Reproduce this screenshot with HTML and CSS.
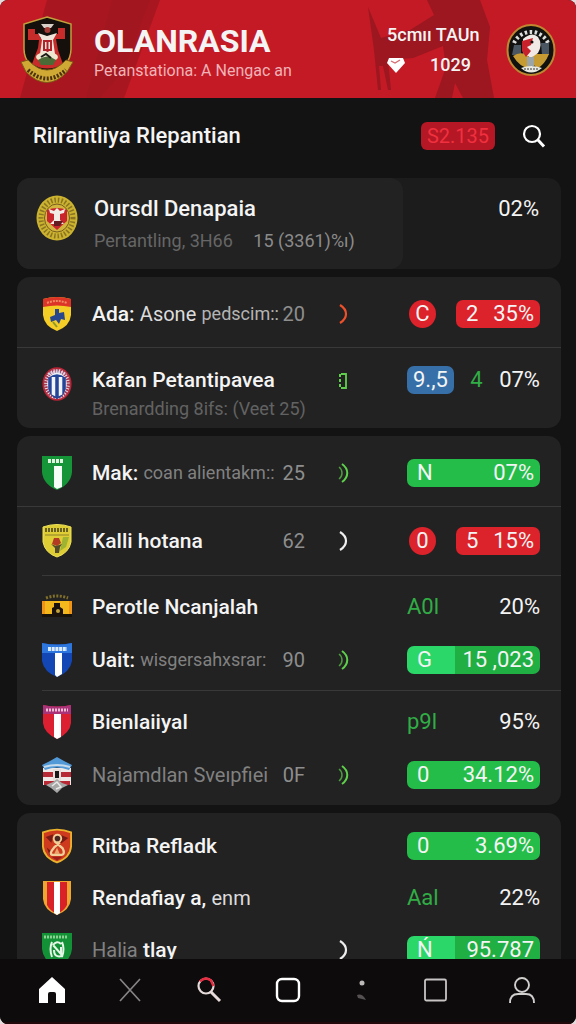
FILE: index.html
```html
<!DOCTYPE html>
<html lang="id">
<head>
<meta charset="utf-8">
<meta name="viewport" content="width=device-width, initial-scale=1">
<title>Olanrasia</title>
<link rel="stylesheet" href="styles.css">
</head>
<body>
<svg class="defs" aria-hidden="true">
  <symbol id="arc" viewBox="0 0 12 22"><path d="M3 2C11 7 11 15 3 20" fill="none" stroke="currentColor" stroke-width="2.200"/></symbol>
  <symbol id="arcs" viewBox="0 0 12 22"><path d="M5 2C12 7 12 15 5 20" fill="none" stroke="currentColor" stroke-width="2"/><path d="M2 5C6 8 6 14 2 17" fill="none" stroke="currentColor" stroke-width="1.500" opacity=".7"/></symbol>
</svg>
<div class="app">
  <header class="hero">
    <svg class="hero-art" viewBox="0 0 576 98" preserveAspectRatio="none" aria-hidden="true">
      <path d="M47 0H160L124 98H20Z" fill="#a8171f"/>
      <path d="M112 0H150L124 70L100 98H86Z" fill="#981820" opacity=".4"/>
      <path d="M427 0H480L490 27L487 60L494 98H463L455 83L452 98H435L446 67L443 46L413 58L388 60L391 90L388 90L383 66H379L381 90H378L374 50L368 7L381 38L410 30L434 15Z" fill="#9c171f"/>
    </svg>
    <svg class="crest" viewBox="0 0 56 68" aria-hidden="true">
      <path d="M27 1L51 8V33C51 47 39 56 27 61C14 55 4 47 4 33V8Z" fill="#15100c" stroke="#c2a13c" stroke-width="1.500"/>
      <path d="M8 13H15V18H20V22H34V18H38V12H45V23H36L38 34L43 48Q27 57 12 48L18 32L19 24H8Z" fill="#c72b2a"/>
      <path d="M18 17L27 20L37 17L33 24L35 38H20L22 24Z" fill="#eee4da"/>
      <path d="M21 8H34L31 12H24Z" fill="#d8d0c8"/><circle cx="27.500" cy="14" r="3" fill="#a43a33"/>
      <path d="M24 25H31V34H24ZM27.500 25V36" fill="none" stroke="#b0232a" stroke-width="2"/>
      <ellipse cx="27" cy="41" rx="11" ry="5" fill="#efe6cf"/><path d="M18 44Q27 37 36 44L33 49H21Z" fill="#4b6b36"/><path d="M21 41L26 38L31 42" stroke="#1b1b17" fill="none" stroke-width="2"/>
      <path d="M1 46L8 44Q27 64 46 44L53 46L47 56Q27 77 6 56Z" fill="#d0a935" stroke="#7b5a17"/>
      <path d="M8 54Q27 71 46 54" fill="none" stroke="#4a3210" stroke-width="4" stroke-dasharray="2 1.500"/>
    </svg>
    <div class="hero-title">
      <h1>OLANRASIA</h1>
      <p>Petanstationa: A Nengac an</p>
    </div>
    <div class="hero-stats">
      <span>5cmıı TAUn</span>
      <span class="hero-score">
        <svg class="gem" viewBox="0 0 18 16" aria-hidden="true"><path d="M2 1H16L18 6L9 16L0 6Z" fill="#fff"/><path d="M4 4L8 6L13 3" fill="none" stroke="#d76b70" stroke-width="1.300"/></svg>
        1029
      </span>
    </div>
    <svg class="avatar" viewBox="0 0 50 52" aria-hidden="true">
      <ellipse cx="25" cy="26" rx="23.500" ry="25" fill="#11110f" stroke="#bf8730" stroke-width="2"/>
      <path d="M8 19A19 20 0 0 1 42 19" fill="none" stroke="#ddd" stroke-width="4" stroke-dasharray="2.500 2.500"/>
      <path d="M8 21H15V31H6ZM35 19H43V31H36Z" fill="#4a5763"/>
      <path d="M7 32Q14 27 22 31L25 45Q14 44 7 32ZM27 30H43Q39 40 32 44L26 40Z" fill="#c69c32"/>
      <path d="M17 15Q26 7 32 13Q37 20 32 29L25 34L17 29Z" fill="#f1e9e5"/>
      <path d="M16 17L27 14L25 21L21 23L25 27L20 33L16 27Z" fill="#c7222b"/><circle cx="26" cy="18" r="1.500" fill="#111"/>
      <path d="M21 33H28V42H21Z" fill="#9ba5a7"/><path d="M15 44Q25 40 36 44Q25 53 15 44Z" fill="#e9e9e3"/><path d="M18 45H33" stroke="#333" stroke-dasharray="2 1"/>
    </svg>
  </header>

  <section class="toolbar">
    <h2>Rilrantliya Rlepantian</h2>
    <span class="tag">S2.135</span>
    <button class="icon-button" type="button" aria-label="Search">
      <svg viewBox="0 0 24 24" aria-hidden="true"><circle cx="10" cy="10" r="8"/><path d="M15.500 15.500L22 22.500" stroke-width="3"/></svg>
    </button>
  </section>

  <main class="list">
    <section class="card summary">
      <div class="summary-main">
        <svg class="seal" viewBox="0 0 42 46" aria-hidden="true">
          <ellipse cx="21" cy="23" rx="20.500" ry="22.500" fill="#cbb32f"/>
          <ellipse cx="21" cy="23" rx="16" ry="18" fill="none" stroke="#8a7423" stroke-width="5" stroke-dasharray="1.500 2"/>
          <ellipse cx="21" cy="23" rx="12.500" ry="14" fill="#d2b53d" stroke="#775c1d"/>
          <path d="M11 15Q21 11 31 15V26L21 35L11 26Z" fill="#c9252c"/>
          <path d="M13 14L18 16L21 13L24 16L29 14L28 18L24 19V25L28 29H14L18 25V19L14 18Z" fill="#f2ece6"/>
          <path d="M18 26H27L24 31H18Z" fill="#641c20"/>
        </svg>
        <div class="summary-text">
          <h3>Oursdl Denapaia</h3>
          <p>Pertantling, 3H66 <span class="bright">15 (3361)%ı)</span></p>
        </div>
      </div>
      <strong class="summary-value">02%</strong>
    </section>

    <ul class="card">
      <li class="row tall">
        <svg class="badge" viewBox="0 0 30 36" aria-hidden="true"><path d="M1 3Q15-1 29 3V19Q28 30 15 35Q2 30 1 19Z" fill="#f4cd26"/><path d="M1 3Q15-1 29 3V11Q15 8 1 11Z" fill="#dc3426"/><path d="M5 7Q15 3 25 7" fill="none" stroke="#f08a64" stroke-width="2" stroke-dasharray="2 1"/><path d="M13 13H17V17L22 16L23 24L19 23L17 28L14 24L9 26L8 21L13 19Z" fill="#28468e"/><path d="M11 26L15 31" stroke="#8c9a2c" stroke-width="2"/></svg>
        <div class="name"><b>Ada:</b>&nbsp;<span class="lit">Asone</span>&nbsp;<span class="soft">pedscim::</span><span class="count">20</span></div>
        <svg class="trend red" aria-hidden="true"><use href="#arc"/></svg>
        <div class="values"><span class="dot">C</span><span class="pill loss"><span>2</span><span>35%</span></span></div>
      </li>
      <li class="row double">
        <svg class="badge" viewBox="0 0 34 38" aria-hidden="true"><ellipse cx="17" cy="19" rx="15.500" ry="18" fill="#edf1f8" stroke="#b72435" stroke-width="2"/><ellipse cx="17" cy="19" rx="13" ry="15" fill="none" stroke="#a93851" stroke-width="4" stroke-dasharray="2 1"/><path d="M7 12Q17 4 27 12V24Q25 33 17 36Q9 33 7 24Z" fill="#254599"/><path d="M11 11H15V33L11 31ZM19 11H23V31L19 33Z" fill="#f1f5fb"/><path d="M7 8Q17 2 27 8" fill="none" stroke="#d2d3e9" stroke-width="3" stroke-dasharray="2 1"/></svg>
        <div class="name"><b>Kafan Petantipavea</b><small>Brenardding 8ifs: (Veet 25)</small></div>
        <svg class="trend green" viewBox="0 0 12 22" aria-hidden="true"><path d="M4 4H9V18H4" fill="none" stroke="currentColor" stroke-width="1.800"/><path d="M3 4V18" stroke="currentColor" stroke-width="2" stroke-dasharray="3 2"/></svg>
        <div class="values"><span class="pill draw">9.,5</span><span class="up">4</span><span>07%</span></div>
      </li>
    </ul>

    <ul class="card">
      <li class="row tall">
        <svg class="badge" viewBox="0 0 30 36" aria-hidden="true"><path d="M0 1H30V17Q29 29 15 35Q1 29 0 17Z" fill="#159538"/><path d="M12 11H20V32L15 34L12 32Z" fill="#f4fff5"/><path d="M6 6H22" stroke="#dff4df" stroke-width="4" stroke-dasharray="3 1"/></svg>
        <div class="name"><b>Mak:</b>&nbsp;<span class="dim">coan alientakm::</span><span class="count">25</span></div>
        <svg class="trend green" aria-hidden="true"><use href="#arcs"/></svg>
        <div class="values"><span class="pill win"><span>N</span><span>07%</span></span></div>
      </li>
      <li class="row mid">
        <svg class="badge" viewBox="0 0 30 36" aria-hidden="true"><path d="M1 4Q15-1 29 4V19Q27 30 15 34Q3 30 1 19Z" fill="#dfcd36" stroke="#efe35a"/><path d="M3 7H27" stroke="#675f23" stroke-width="4" stroke-dasharray="2 1"/><path d="M3 12H27" stroke="#8b812b"/><path d="M21 14H27L24 24L18 28Z" fill="#9eb331"/><path d="M12 15H17L19 20L15 23L10 21Z" fill="#b33b24"/><path d="M9 21L14 23L20 21L18 24L17 30H13L13 25Z" fill="#514a2c"/></svg>
        <div class="name"><b>Kalli hotana</b><span class="count">62</span></div>
        <svg class="trend" aria-hidden="true"><use href="#arc"/></svg>
        <div class="values"><span class="dot">0</span><span class="pill loss"><span>5</span><span>15%</span></span></div>
      </li>
      <li class="group">
        <ul>
          <li class="row">
            <svg class="badge" viewBox="0 0 30 36" aria-hidden="true"><path d="M0 12H30V26H0Z" fill="#f3b91c"/><path d="M0 25H30V28H0Z" fill="#17120a"/><path d="M4 9Q15 5 26 9" fill="none" stroke="#81702b" stroke-width="3" stroke-dasharray="2 1.500"/><path d="M0 12H3V25H0ZM27 12H30V25H27Z" fill="#ef9419"/><path d="M10 28V19L12 18V14H18V18L21 20V28Z" fill="#19130b"/><circle cx="16" cy="22" r="2" fill="#c4a33b"/></svg>
            <div class="name"><b>Perotle Ncanjalah</b></div><span></span>
            <div class="values"><span class="code">A0l</span><span>20%</span></div>
          </li>
          <li class="row">
            <svg class="badge" viewBox="0 0 30 36" aria-hidden="true"><path d="M0 1Q15 4 30 1V19Q28 30 15 35Q2 30 0 19Z" fill="#1247b5"/><path d="M0 1Q15 4 30 1V11H0Z" fill="#2d76dd"/><path d="M6 7H25" stroke="#dcecff" stroke-width="4" stroke-dasharray="3 .7"/><path d="M13 11H20V32L15 35L13 33Z" fill="#fff"/></svg>
            <div class="name"><b>Uait:</b>&nbsp;<span class="dim">wisgersahxsrar:</span><span class="count">90</span></div>
            <svg class="trend green" aria-hidden="true"><use href="#arcs"/></svg>
            <div class="values"><span class="pill win split"><span>G</span><span>15 ,023</span></span></div>
          </li>
        </ul>
      </li>
      <li class="group">
        <ul>
          <li class="row">
            <svg class="badge" viewBox="0 0 30 36" aria-hidden="true"><path d="M1 1Q15 4 29 1V19Q28 29 15 35Q2 29 1 19Z" fill="#dc2031"/><path d="M1 1Q15 4 29 1V10H1Z" fill="#a93279"/><path d="M4 6H26" stroke="#edbed6" stroke-width="3" stroke-dasharray="2 1"/><path d="M12 10H19V33L15 35L12 33Z" fill="#fff"/></svg>
            <div class="name"><b>Bienlaiiyal</b></div><span></span>
            <div class="values"><span class="code">p9l</span><span>95%</span></div>
          </li>
          <li class="row">
            <svg class="badge" viewBox="0 0 30 36" aria-hidden="true"><path d="M1 11H29V28H1Z" fill="#eee9e7"/><path d="M1 15H29V20H1ZM2 24H28V28H2Z" fill="#b72934"/><path d="M0 8L8 4L15 0L22 4L30 8L27 13Q15 8 3 13Z" fill="#5299d8"/><path d="M2 10Q15 6 28 10" fill="none" stroke="#c6daeb" stroke-width="2"/><path d="M11 12H19V24H11Z" fill="#e6dedb"/><path d="M13 14H17V21H13Z" fill="#171717"/><path d="M4 28L11 25L15 22L20 26L26 28L20 31L15 36L9 31Z" fill="#a6a7a6"/><path d="M10 29L15 25L19 30L14 32" stroke="#e8e8e6" fill="none" stroke-width="1.500"/></svg>
            <div class="name"><span class="dim wide">Najamdlan Sveıpfiei</span><span class="count">0F</span></div>
            <svg class="trend green" aria-hidden="true"><use href="#arcs"/></svg>
            <div class="values"><span class="pill win"><span>0</span><span>34.12%</span></span></div>
          </li>
        </ul>
      </li>
    </ul>

    <ul class="card last">
      <li class="row">
        <svg class="badge" viewBox="0 0 32 37" aria-hidden="true"><path d="M1 4Q16-2 31 4V19Q30 31 16 36Q2 31 1 19Z" fill="#ce3a1e" stroke="#eab12d" stroke-width="2"/><path d="M4 9L12 6L10 15ZM21 7L28 10L20 16ZM5 20L11 25L8 28Z" fill="#781b14"/><path d="M13 13L22 21Q25 27 21 28H11Q7 27 13 20L19 15" fill="none" stroke="#f1cf98" stroke-width="2.500"/><circle cx="16.500" cy="10.500" r="4" fill="#4a2722" stroke="#f1cf98" stroke-width="2"/><path d="M16 20L19 27H13Z" fill="#e8a36a"/><path d="M10 30H22L16 34Z" fill="#9c1c1a"/></svg>
        <div class="name"><b>Ritba Refladk</b></div><span></span>
        <div class="values"><span class="pill win"><span>0</span><span>3.69%</span></span></div>
      </li>
      <li class="row">
        <svg class="badge" viewBox="0 0 30 36" aria-hidden="true"><path d="M1 1H29V19Q28 30 15 35Q2 30 1 19Z" fill="#efa62e"/><path d="M5 2H25V25Q22 31 15 34Q8 31 5 25Z" fill="#d92128"/><path d="M12 2H18V33L15 35L12 33Z" fill="#fff"/></svg>
        <div class="name"><b>Rendafiay a,</b>&nbsp;<span class="lit">enm</span></div><span></span>
        <div class="values"><span class="code">Aal</span><span>22%</span></div>
      </li>
      <li class="row">
        <svg class="badge" viewBox="0 0 30 36" aria-hidden="true"><path d="M0 1H30V17Q29 29 15 35Q1 29 0 17Z" fill="#139137"/><path d="M2 5H25" stroke="#8cd092" stroke-width="3" stroke-dasharray="2 1"/><path d="M10 10Q7 17 10 25M20 10Q23 17 20 25M11 13Q15 8 19 12M11 13L19 22V15M12 18Q12 26 20 24" fill="none" stroke="#e5f7e6" stroke-width="2"/></svg>
        <div class="name"><span class="dim wide">Halia</span>&nbsp;<b>tlay</b></div>
        <svg class="trend" aria-hidden="true"><use href="#arc"/></svg>
        <div class="values"><span class="pill win split"><span>Ń</span><span>95.787</span></span></div>
      </li>
    </ul>
  </main>

  <nav class="tabs" aria-label="Main">
    <a href="#home" aria-label="Home"><svg viewBox="0 0 28 28"><path d="M14 1L27 13V27H18V18Q18 16 16 16H12Q10 16 10 18V27H1V13Z" fill="#fff"/></svg></a>
    <a href="#close" aria-label="Close"><svg viewBox="0 0 28 28"><path d="M4 3L24 25M24 3L4 25" stroke="#858383" stroke-width="1.700"/></svg></a>
    <a href="#search" aria-label="Search"><svg viewBox="0 0 28 28"><circle cx="11" cy="10" r="7.500" fill="none" stroke="#e6dada" stroke-width="2.200"/><path d="M5 5.500Q10 0 16 4.500L18.500 10" fill="none" stroke="#e72d42" stroke-width="2.500"/><path d="M16 16L25 25" stroke="#e6dada" stroke-width="3"/></svg></a>
    <a href="#board" aria-label="Board"><svg viewBox="0 0 28 28"><rect x="4" y="3" width="22" height="22" rx="5" fill="none" stroke="#fff" stroke-width="2.400"/></svg></a>
    <a href="#more" aria-label="More"><svg viewBox="0 0 28 28"><circle cx="14" cy="7" r="2.500" fill="#bdb9b9"/><path d="M9 19Q14 17 18 24L10 22Z" fill="#555152"/></svg></a>
    <a href="#pages" aria-label="Pages"><svg viewBox="0 0 28 28"><rect x="3" y="3.500" width="21" height="21" rx="1.500" fill="none" stroke="#c8c4c4" stroke-width="1.800"/></svg></a>
    <a href="#profile" aria-label="Profile"><svg viewBox="0 0 28 28"><circle cx="14" cy="9" r="7" fill="none" stroke="#d1cece" stroke-width="1.900"/><path d="M2 27Q2 18 10 18H18Q26 18 26 27" fill="none" stroke="#d1cece" stroke-width="1.900"/></svg></a>
  </nav>
</div>
</body>
</html>
```
FILE: styles.css
```css
* { box-sizing: border-box; }

body {
  margin: 0;
  background: #e4dcdc;
  color: #f4f4f4;
  font: 400 22px/28px Roboto, "Liberation Sans", sans-serif;
}

h1, h2, h3, p, ul { margin: 0; padding: 0; }
ul { list-style: none; }
b, h2, h3 { font-weight: 500; }
.defs { display: none; }

.app {
  display: flex;
  flex-direction: column;
  height: 100vh;
  overflow: hidden;
  border-radius: 8px;
  background: #141313;
}

/* Header */
.hero {
  position: relative;
  flex: none;
  display: flex;
  align-items: center;
  padding: 16px 20px 14px;
  background: #c31a26;
}
.hero > * { position: relative; }
.hero > .hero-art { position: absolute; inset: 0; width: 100%; height: 100%; }
.crest { width: 56px; height: 68px; }
.hero-title { flex: 1; padding: 8px 0 0 18px; white-space: nowrap; }
.hero-title h1 { font-size: 32px; line-height: 34px; font-weight: 700; }
.hero-title p { color: #f0b3b6; font-size: 16px; line-height: 26px; }
.hero-stats { display: flex; flex-direction: column; width: 90px; margin-right: 29px; font-size: 18px; font-weight: 500; line-height: 30px; white-space: nowrap; }
.hero-score { display: flex; align-items: center; justify-content: space-between; padding-right: 6px; }
.gem { width: 18px; height: 16px; }
.avatar { width: 50px; height: 52px; }

.toolbar { flex: none; display: flex; align-items: center; padding: 20px 30px 24px 33px; }
.toolbar h2 { flex: 1; font-size: 22px; line-height: 36px; }
.tag { width: 74px; border-radius: 6px; background: #b51724; color: #f0303f; font-size: 20px; line-height: 28px; text-align: center; }
.icon-button { display: flex; margin-left: 27px; padding: 0; border: 0; background: none; }
.icon-button svg { width: 24px; height: 24px; fill: none; stroke: #fff; stroke-width: 2.2; }

/* Cards */
.list { flex: 1; min-height: 0; padding: 0 15px 16px 17px; overflow-y: auto; scrollbar-width: none; }
.card { margin-bottom: 8px; border-radius: 13px; background: #222; }

.summary { display: flex; justify-content: space-between; background: #1c1c1c; }
.summary-main { display: flex; width: 71%; padding: 17px 19px 10px; border-radius: 13px; background: #222; }
.seal { flex: none; width: 42px; height: 46px; }
.summary-text { padding-left: 16px; white-space: nowrap; }
.summary-text h3 { font-size: 22px; }
.summary-text p { color: #666; font-size: 18px; line-height: 36px; }
.bright { padding-left: 16px; color: #8b8b8b; }
.summary-value { padding: 17px 22px; font-weight: 400; }

.row {
  display: grid;
  grid-template-columns: 30px minmax(0, 1fr) 102px 133px;
  align-items: center;
  min-height: 53px;
  padding: 0 21px 0 25px;
}
.tall { min-height: 70px; padding-top: 4px; }
.mid { min-height: 69px; }
.card > .tall + li { border-top: 1px solid #393939; }
.double { min-height: 81px; padding-top: 18px; align-items: start; }
.group { margin-left: 25px; padding: 4px 0; border-top: 1px solid #393939; }
.group .row { padding-left: 0; }
.last { padding-top: 7px; }
.last .row { min-height: 52px; }

.badge { width: 30px; height: 36px; }
.name { display: flex; padding-left: 20px; font-size: 21px; white-space: nowrap; }
.double .name { flex-direction: column; }
.name small { color: #626262; font-size: 18px; line-height: 30px; }
.soft { color: #b4b4b4; font-size: 18px; }
.dim { color: #818181; font-size: 18px; }
.wide { font-size: 20px; }
.lit { color: #dcdcdc; font-size: 20px; }
.count { margin-left: auto; color: #8e8e8e; font-size: 20px; }
.trend { width: 12px; height: 22px; margin-left: 32px; color: #eee; }
.red { color: #ed512c; }
.green { color: #5fd04b; }
.double .trend { margin-top: 4px; }

.values { display: flex; align-items: center; justify-content: space-between; white-space: nowrap; }
.pill { display: flex; justify-content: space-between; padding: 0 6px 0 10px; border-radius: 7px; line-height: 28px; }
.dot { width: 27px; margin-left: 2px; border-radius: 50%; background: #dc222a; text-align: center; }
.loss { width: 84px; background: #dc222a; }
.draw { padding: 0 6px; background: #376fa8; }
.win { width: 100%; background: #24bd49; }
.split { background: linear-gradient(90deg, #2bd768 36%, #1faf43 36%); }
.up, .code { color: #31ad46; }

/* Bottom tabs */
.tabs {
  flex: none;
  display: grid;
  grid-template-columns: 78fr 78fr 79fr 77fr 73fr 76fr 96fr;
  padding: 17px 6px 18px 13px;
  border-bottom: 2px solid #21080a;
  background: #0d0b0c;
}
.tabs a { display: flex; justify-content: center; }
.tabs svg { width: 28px; height: 28px; }
```
